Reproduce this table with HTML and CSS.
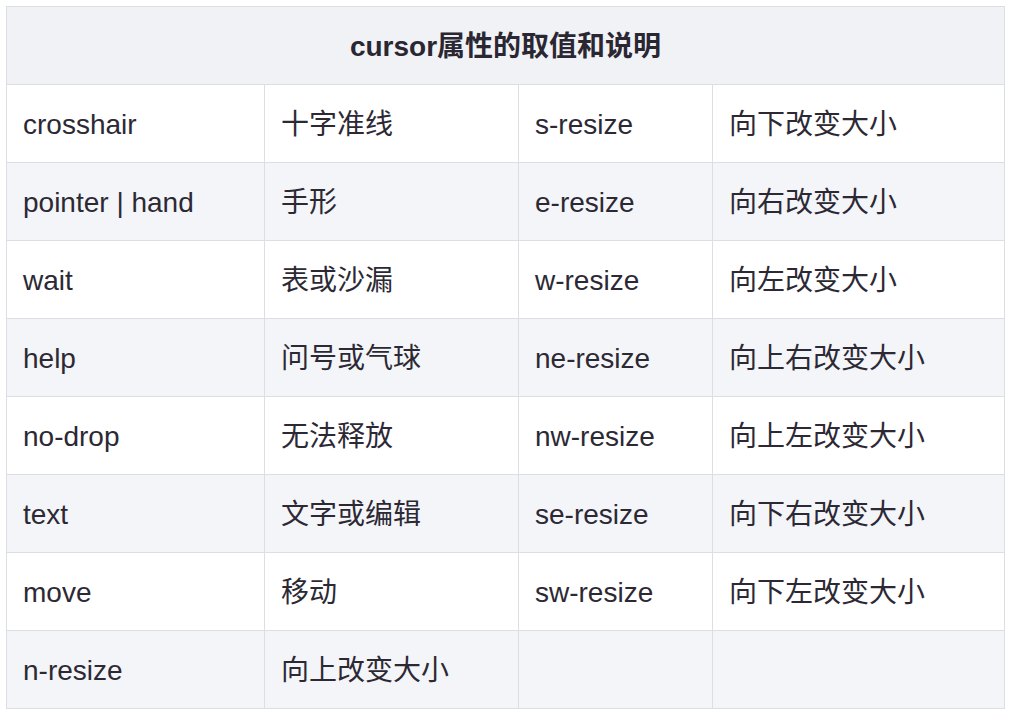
FILE: index.html
```html
<!DOCTYPE html>
<html lang="zh">
<head>
<meta charset="utf-8">
<title>cursor属性的取值和说明</title>
<link rel="stylesheet" href="styles.css">
</head>
<body>
<table class="cursor-table">
  <colgroup>
    <col class="c1"><col class="c2"><col class="c3"><col class="c4">
  </colgroup>
  <thead>
    <tr><th colspan="4">cursor属性的取值和说明</th></tr>
  </thead>
  <tbody>
    <tr><td>crosshair</td><td>十字准线</td><td>s-resize</td><td>向下改变大小</td></tr>
    <tr><td>pointer | hand</td><td>手形</td><td>e-resize</td><td>向右改变大小</td></tr>
    <tr><td>wait</td><td>表或沙漏</td><td>w-resize</td><td>向左改变大小</td></tr>
    <tr><td>help</td><td>问号或气球</td><td>ne-resize</td><td>向上右改变大小</td></tr>
    <tr><td>no-drop</td><td>无法释放</td><td>nw-resize</td><td>向上左改变大小</td></tr>
    <tr><td>text</td><td>文字或编辑</td><td>se-resize</td><td>向下右改变大小</td></tr>
    <tr><td>move</td><td>移动</td><td>sw-resize</td><td>向下左改变大小</td></tr>
    <tr><td>n-resize</td><td>向上改变大小</td><td></td><td></td></tr>
  </tbody>
</table>
</body>
</html>
```

FILE: styles.css
```css
html, body {
  margin: 0;
  padding: 0;
  background: #ffffff;
}
body {
  padding: 6px 0 0 6px;
  font-family: "Liberation Sans", "Noto Sans CJK SC", sans-serif;
  color: #2c2935;
}
.cursor-table {
  border-collapse: collapse;
  table-layout: fixed;
  width: 998px;
}
.c1 { width: 258px; }
.c2 { width: 254px; }
.c3 { width: 194px; }
.c4 { width: 292px; }
.cursor-table th,
.cursor-table td {
  border: 1px solid #dcdee3;
  height: 75px;
  padding: 2px 0 0 16px;
  font-size: 28px;
  line-height: 1;
  vertical-align: middle;
  text-align: left;
  white-space: nowrap;
}
.cursor-table th {
  background: #f0f2f6;
  text-align: center;
  font-weight: bold;
  padding: 2px 0 0 0;
  font-size: 28px;
  color: #2a2732;
}
.cursor-table tbody tr:nth-child(odd) td {
  background: #ffffff;
}
.cursor-table tbody tr:nth-child(even) td {
  background: #f4f5f8;
}
```
